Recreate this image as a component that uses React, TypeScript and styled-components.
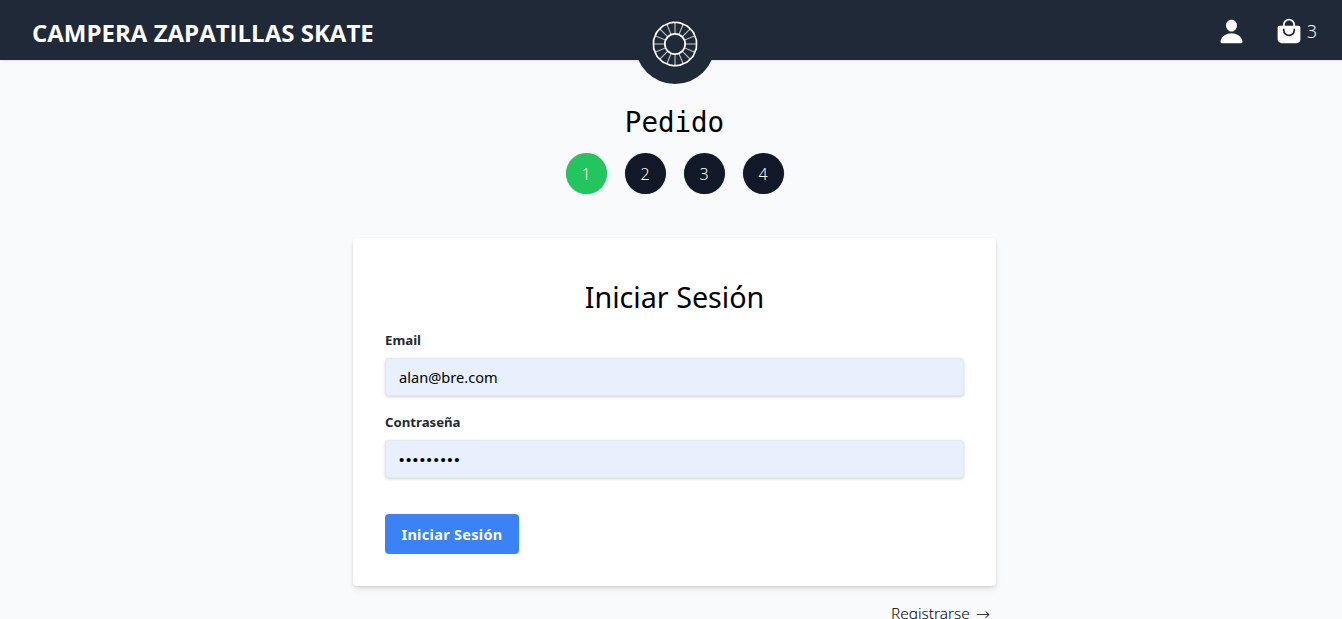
import styled, { createGlobalStyle } from "styled-components";
import { IoPerson, IoBagHandle } from "react-icons/io5";

const spokes = Array.from({ length: 16 }, (_, i) => (i * 360) / 16);

function scallopPath() {
  const cx = 24;
  const cy = 24;
  const count = 16;
  const outer = 22.4;
  const bulge = 23.4;
  let d = "";
  for (let i = 0; i < count; i++) {
    const a = (i / count) * Math.PI * 2 - Math.PI / 2;
    const mid = a + Math.PI / count;
    const next = a + (Math.PI * 2) / count;
    const x = cx + outer * Math.cos(a);
    const y = cy + outer * Math.sin(a);
    if (i === 0) d += `M${x.toFixed(2)} ${y.toFixed(2)}`;
    d += ` Q${(cx + bulge * Math.cos(mid)).toFixed(2)} ${(cy + bulge * Math.sin(mid)).toFixed(2)} ${(cx + outer * Math.cos(next)).toFixed(2)} ${(cy + outer * Math.sin(next)).toFixed(2)}`;
  }
  return d + "Z";
}

function Logo() {
  return (
    <svg width="46" height="46" viewBox="0 0 48 48" fill="none" stroke="#fff">
      <path d={scallopPath()} strokeWidth="1.7" strokeLinejoin="round" />
      <circle cx="24" cy="24" r="10.6" strokeWidth="1.8" />
      {spokes.map((angle) => (
        <line
          key={angle}
          x1="24"
          y1="13.4"
          x2="24"
          y2="2"
          strokeWidth="1.1"
          strokeOpacity="0.75"
          transform={`rotate(${angle} 24 24)`}
        />
      ))}
    </svg>
  );
}

export default function App() {
  return (
    <Page>
      <GlobalStyle />
      <Navbar>
        <Brand>CAMPERA ZAPATILLAS SKATE</Brand>
        <LogoBadge>
          <Logo />
        </LogoBadge>
        <NavActions>
          <IoPerson size={27} color="#fff" />
          <Cart>
            <IoBagHandle size={28} color="#fff" />
            <CartCount>3</CartCount>
          </Cart>
        </NavActions>
      </Navbar>
      <Main>
        <Title>Pedido</Title>
        <Steps>
          {[1, 2, 3, 4].map((n) => (
            <Step key={n} $active={n === 1}>
              {n}
            </Step>
          ))}
        </Steps>
        <Card>
          <CardTitle>Iniciar Sesión</CardTitle>
          <Field>
            <Label htmlFor="email">Email</Label>
            <Input id="email" type="email" defaultValue="alan@bre.com" />
          </Field>
          <Field>
            <Label htmlFor="password">Contraseña</Label>
            <PasswordInput id="password" type="password" defaultValue="123456789" />
          </Field>
          <SubmitButton type="button">Iniciar Sesión</SubmitButton>
        </Card>
        <RegisterRow>
          <RegisterLink href="#">
            Registrarse<Arrow>→</Arrow>
          </RegisterLink>
        </RegisterRow>
      </Main>
    </Page>
  );
}

const GlobalStyle = createGlobalStyle`
  html, body {
    margin: 0;
    height: 619px;
    overflow: hidden;
    background: #f9fafb;
  }
  * {
    box-sizing: border-box;
  }
`;

const Page = styled.div`
  width: 1349px;
  font-family: "Noto Sans", "Open Sans", sans-serif;
  color: #000;
`;

const Navbar = styled.header`
  position: relative;
  display: flex;
  align-items: center;
  justify-content: space-between;
  height: 60px;
  padding: 5px 32px 0;
  background: #1f2937;
  box-shadow: 0 1px 3px rgba(0, 0, 0, 0.1);
`;

const Brand = styled.h1`
  margin: 0;
  font-family: "Open Sans", sans-serif;
  font-size: 24px;
  font-weight: 700;
  color: #fff;
`;

const LogoBadge = styled.div`
  position: absolute;
  top: 4px;
  left: 635px;
  display: flex;
  align-items: center;
  justify-content: center;
  width: 80px;
  height: 80px;
  border-radius: 50%;
  background: #1f2937;
`;

const NavActions = styled.div`
  display: flex;
  align-items: center;
  gap: 30px;
  padding-bottom: 3px;
`;

const Cart = styled.div`
  display: flex;
  align-items: center;
  gap: 4px;
`;

const CartCount = styled.span`
  font-size: 18px;
  font-weight: 300;
  color: #f3f4f6;
`;

const Main = styled.main`
  display: flex;
  flex-direction: column;
  align-items: center;
  padding-top: 44px;
`;

const Title = styled.h2`
  margin: 0;
  font-family: "DejaVu Sans Mono", monospace;
  font-size: 27.5px;
  font-weight: 400;
  line-height: 36px;
`;

const Steps = styled.div`
  display: flex;
  gap: 18px;
  margin-top: 13px;
`;

const Step = styled.div<{ $active: boolean }>`
  display: flex;
  align-items: center;
  justify-content: center;
  width: 41px;
  height: 41px;
  border-radius: 50%;
  background: ${(props) => (props.$active ? "#22c55e" : "#111827")};
  box-shadow: 0 0 1px rgba(0, 0, 0, 0.35);
  font-size: 16px;
  font-weight: 300;
  color: #fff;
`;

const Card = styled.section`
  display: flex;
  flex-direction: column;
  width: 643px;
  margin-top: 44px;
  padding: 39px 32px 32px;
  border-radius: 4px;
  background: #fff;
  box-shadow: 0 1px 3px rgba(0, 0, 0, 0.1), 0 4px 6px -1px rgba(0, 0, 0, 0.1);
`;

const CardTitle = styled.h3`
  margin: 0 0 13px;
  font-size: 28.7px;
  font-weight: 400;
  line-height: 40px;
  text-align: center;
`;

const Field = styled.div`
  display: flex;
  flex-direction: column;
  margin-bottom: 16px;
`;

const Label = styled.label`
  margin-bottom: 8px;
  font-size: 13.2px;
  font-weight: 700;
  line-height: 20px;
  color: #1f2937;
`;

const Input = styled.input`
  width: 100%;
  height: 38px;
  padding: 0 13px;
  border: 1px solid #e5e7eb;
  border-radius: 4px;
  background: #e8f0fe;
  box-shadow: 0 1px 3px rgba(0, 0, 0, 0.18);
  font-family: inherit;
  font-size: 14.6px;
  font-weight: 400;
  color: #000;
  outline: none;
`;

const PasswordInput = styled(Input)`
  font-family: "Liberation Sans", sans-serif;
  font-size: 15px;
  letter-spacing: 1.65px;
`;

const SubmitButton = styled.button`
  flex-shrink: 0;
  width: 134px;
  height: 40px;
  margin-top: 20px;
  border: none;
  border-radius: 4px;
  background: #3b82f6;
  font-family: inherit;
  font-size: 14.5px;
  font-weight: 700;
  letter-spacing: 0.3px;
  color: #fff;
`;

const RegisterRow = styled.div`
  display: flex;
  justify-content: flex-end;
  width: 643px;
  margin-top: 16px;
  padding-right: 6px;
`;

const RegisterLink = styled.a`
  display: flex;
  align-items: center;
  gap: 6px;
  font-size: 15.4px;
  font-weight: 300;
  line-height: 24px;
  color: #000;
  text-decoration: none;
`;

const Arrow = styled.span`
  font-family: "DejaVu Sans", sans-serif;
  font-size: 17px;
`;
